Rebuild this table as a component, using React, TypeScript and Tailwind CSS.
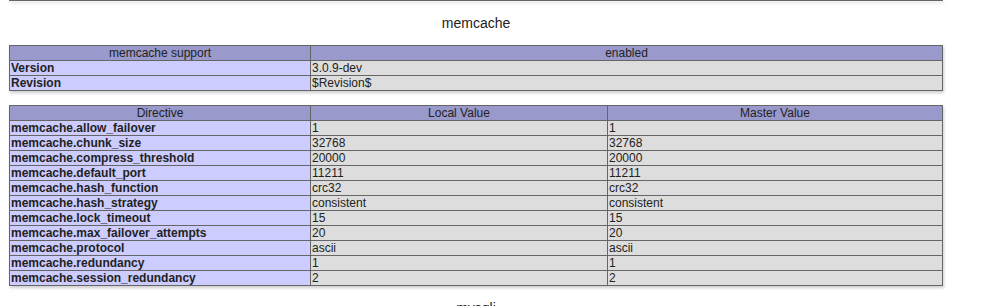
import React from "react";

const directives: [string, string, string][] = [
  ["memcache.allow_failover", "1", "1"],
  ["memcache.chunk_size", "32768", "32768"],
  ["memcache.compress_threshold", "20000", "20000"],
  ["memcache.default_port", "11211", "11211"],
  ["memcache.hash_function", "crc32", "crc32"],
  ["memcache.hash_strategy", "consistent", "consistent"],
  ["memcache.lock_timeout", "15", "15"],
  ["memcache.max_failover_attempts", "20", "20"],
  ["memcache.protocol", "ascii", "ascii"],
  ["memcache.redundancy", "1", "1"],
  ["memcache.session_redundancy", "2", "2"],
];

const th = "border border-[#666] bg-[#99c] font-normal text-center px-px h-[15px] leading-[14px] align-baseline";
const e = "border border-[#666] bg-[#ccf] font-bold text-left px-px h-[15px] leading-[14px] align-baseline";
const v = "border border-[#666] bg-[#ddd] text-left px-px h-[15px] leading-[14px] align-baseline";

const Title = ({ text }: { text: string }) => (
  <div className="w-[934px] h-[44px] flex items-center justify-center text-[14px] text-[#222]">
    {text}
  </div>
);

export default function App() {
  return (
    <div className="bg-white h-[306px] overflow-hidden font-['Liberation_Sans',Arial,sans-serif] text-[#222] pl-[9px]">
      <div className="w-[934px] h-px bg-[#666] shadow-[1px_2px_3px_#ccc]" />
      <Title text="memcache" />
      <table className="w-[934px] table-fixed border-collapse text-[12px] shadow-[1px_2px_3px_#ccc]">
        <colgroup>
          <col className="w-[301px]" />
          <col />
        </colgroup>
        <tbody>
          <tr>
            <th className={th}>memcache support</th>
            <th className={th}>enabled</th>
          </tr>
          <tr>
            <td className={e}>Version</td>
            <td className={v}>3.0.9-dev</td>
          </tr>
          <tr>
            <td className={e}>Revision</td>
            <td className={v}>$Revision$</td>
          </tr>
        </tbody>
      </table>
      <div className="h-[14px]" />
      <table className="w-[934px] table-fixed border-collapse text-[12px] shadow-[1px_2px_3px_#ccc]">
        <colgroup>
          <col className="w-[301px]" />
          <col className="w-[297px]" />
          <col />
        </colgroup>
        <tbody>
          <tr>
            <th className={th}>Directive</th>
            <th className={th}>Local Value</th>
            <th className={th}>Master Value</th>
          </tr>
          {directives.map(([name, local, master]) => (
            <tr key={name}>
              <td className={e}>{name}</td>
              <td className={v}>{local}</td>
              <td className={v}>{master}</td>
            </tr>
          ))}
        </tbody>
      </table>
      <div className="w-[934px] pt-[12px] text-center text-[14px] leading-[20px] text-[#222]">mysqli</div>
    </div>
  );
}
